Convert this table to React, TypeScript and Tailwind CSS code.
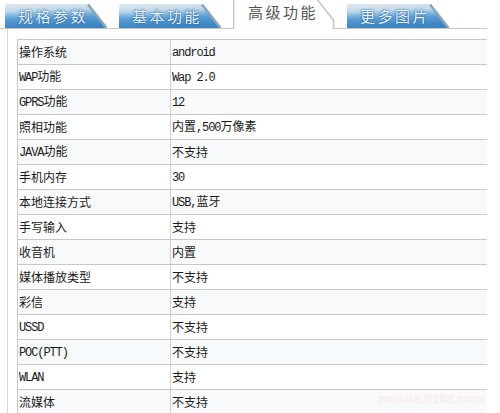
import React from "react";

interface SpecRow {
  name: string;
  value: string;
}

const rows: SpecRow[] = [
  { name: "操作系统", value: "android" },
  { name: "WAP功能", value: "Wap 2.0" },
  { name: "GPRS功能", value: "12" },
  { name: "照相功能", value: "内置,500万像素" },
  { name: "JAVA功能", value: "不支持" },
  { name: "手机内存", value: "30" },
  { name: "本地连接方式", value: "USB,蓝牙" },
  { name: "手写输入", value: "支持" },
  { name: "收音机", value: "内置" },
  { name: "媒体播放类型", value: "不支持" },
  { name: "彩信", value: "支持" },
  { name: "USSD", value: "不支持" },
  { name: "POC(PTT)", value: "不支持" },
  { name: "WLAN", value: "支持" },
  { name: "流媒体", value: "不支持" },
];

const tabs = ["规格参数", "基本功能", "高级功能", "更多图片"];
const activeTab = 2;

// ascii runs get the narrow mono face, the rest stays CJK
const MixedText = ({ text }: { text: string }) => {
  const parts = text.match(/[\x20-\x7e]+|[^\x20-\x7e]+/g) || [];
  return (
    <span className="leading-[16px]">
      {parts.map((p, i) =>
        /^[\x20-\x7e]+$/.test(p) ? (
          <span key={i} className="font-['Liberation_Mono',monospace] text-[12px] tracking-[-1.1px]">
            {p}
          </span>
        ) : (
          <span key={i}>{p}</span>
        )
      )}
    </span>
  );
};

const Tab = ({ label, index }: { label: string; index: number }) => {
  const id = `tabgrad${index}`;
  if (index === activeTab) {
    return (
      <div className="relative w-[102px] h-[30px] -mb-px z-10">
        <svg className="absolute inset-0" width="102" height="30" viewBox="0 0 102 30">
          <path d="M0.5 30 L0.5 -1 L83 -1 L100.5 21 L100.5 30" fill="#ffffff" stroke="#c4c4c4" strokeWidth="1.5" />
        </svg>
        <span className="relative block pl-[15px] pt-[3px] text-[15px] leading-[20px] tracking-[2.5px] text-[#555555] font-['Noto_Sans_CJK_SC',sans-serif]">
          {label}
        </span>
      </div>
    );
  }
  return (
    <div className="relative w-[102px] h-[24px]">
      <svg className="absolute inset-0" width="102" height="24" viewBox="0 0 102 24">
        <defs>
          <linearGradient id={id} x1="0" y1="0" x2="0.15" y2="1">
            <stop offset="0" stopColor="#e3ebf1" />
            <stop offset="0.3" stopColor="#c2d8e9" />
            <stop offset="0.45" stopColor="#8dbde2" />
            <stop offset="0.62" stopColor="#5b9ed3" />
            <stop offset="1" stopColor="#3b84c1" />
          </linearGradient>
        </defs>
        <path d="M0 24 L0 3 Q0 0 3 0 L83 0 L102 24 Z" fill={`url(#${id})`} />
        <path d="M83 0.5 L101.5 24" stroke="#8ea5b8" strokeWidth="2.5" fill="none" />
        <path d="M1 0.5 L83 0.5" stroke="#d9e2e9" strokeWidth="1" fill="none" />
      </svg>
      <span className="relative block pl-[13px] pt-[2px] text-[15px] leading-[20px] tracking-[2.5px] text-[#eaf3fb] [text-shadow:0_0_1px_#1d5a94,0_0_2px_#2b6ca6] font-['Noto_Sans_CJK_SC',sans-serif]">
        {label}
      </span>
    </div>
  );
};

export default function App() {
  return (
    <div className="relative w-[500px] h-[413px] overflow-hidden bg-white font-['Noto_Sans_CJK_SC',sans-serif] text-[12px] text-[#1a1a1a]">
      <div className="flex items-end gap-[12px] h-[29px] w-[487px] pl-[5px] border-b border-[#c6c6c6]">
        {tabs.map((t, i) => (
          <Tab key={t} label={t} index={i} />
        ))}
      </div>
      <div className="ml-[7px] border-l border-[#d6d6d6] pt-[10px] pl-[9px] h-[400px]">
        <div className="w-[470px] border-t border-l border-[#c8c8c8]">
          {rows.map((r, i) => (
            <div
              key={r.name}
              className={`flex h-[25px] border-b border-[#c8c8c8] ${i % 2 === 0 ? "bg-[#f8f9fb]" : "bg-white"}`}
            >
              <div className="w-[153px] flex items-center pl-[1px] border-r border-[#d2d2d2]">
                <MixedText text={r.name} />
              </div>
              <div className="flex-1 flex items-center pl-[1px]">
                <MixedText text={r.value} />
              </div>
            </div>
          ))}
        </div>
      </div>
      <span className="absolute right-[16px] bottom-[5px] text-[13px] font-bold text-[#fbeded] font-['Liberation_Sans',sans-serif]">
        mobile.it168.com
      </span>
    </div>
  );
}
